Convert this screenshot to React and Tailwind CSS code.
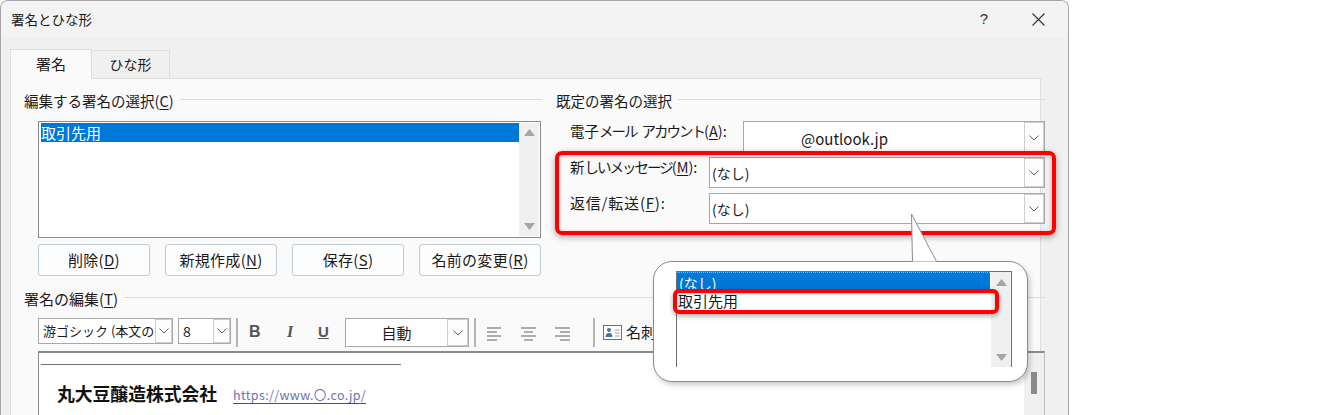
const jp = { fontFamily: '"Noto Sans CJK JP","Noto Sans",sans-serif' };

function Chevron() {
  return (
    <svg width="10" height="6" viewBox="0 0 10 6" fill="none" stroke="#606060" strokeWidth="1">
      <path d="M0.5 0.5 L5 5 L9.5 0.5" />
    </svg>
  );
}

function ArrowBtn({ className }) {
  return (
    <div className={"flex items-center justify-center border border-[#cfcfcf] bg-[#fdfdfd] shrink-0 " + className}>
      <Chevron />
    </div>
  );
}

function U({ children }) {
  return <span className="underline underline-offset-2">{children}</span>;
}

function K({ children }) {
  return <span className="tracking-[-2px]">{children}</span>;
}

function GroupTitle({ children, className }) {
  return (
    <div className={"flex items-center gap-[6px] h-[20px] text-[14.5px] leading-[20px] text-[#1a1a1a] " + className}>
      <span className="whitespace-nowrap">{children}</span>
      <div className="flex-1 h-px bg-[#dcdcdc] -mt-[3px]" />
    </div>
  );
}

function Btn({ children, className }) {
  return (
    <div className={"h-[32px] border border-[#bccad6] rounded-[3px] bg-[#fdfdfd] flex items-center justify-center text-[15px] tracking-[0.3px] text-[#1a1a1a] whitespace-nowrap " + className}>
      <span>{children}</span>
    </div>
  );
}

function FieldRow({ label, value, mt, h, selectW, valueClass }) {
  return (
    <div className={"flex justify-between items-start pl-[14px] " + mt}>
      <span className="text-[14.5px] leading-[20px] text-[#1a1a1a] whitespace-nowrap">{label}</span>
      <div className={"bg-white border border-[#a8a8a8] flex items-stretch " + selectW + " " + h}>
        <div className={"flex-1 text-[14px] text-[#1a1a1a] flex items-center " + valueClass}>{value}</div>
        <ArrowBtn className="w-[20px]" />
      </div>
    </div>
  );
}

function Align({ kind }) {
  const rows = kind === "l"
    ? ["M0 1H14", "M0 5H10", "M0 9H14", "M0 13H10"]
    : kind === "c"
    ? ["M0 1H15", "M3 5H12", "M0 9H15", "M3 13H12"]
    : ["M0 1H15", "M5 5H15", "M0 9H15", "M5 13H15"];
  return (
    <svg width="15" height="14" viewBox="0 0 15 14" fill="none" stroke="#606060" strokeWidth="1">
      {rows.map((d) => <path key={d} d={d} />)}
    </svg>
  );
}

function Sep({ className }) {
  return <div className={"w-[2px] h-[29px] bg-[#b4b4b4] shrink-0 " + className} />;
}

export default function App() {
  return (
    <div className="relative w-[1344px] h-[415px] bg-white overflow-hidden" style={jp}>
      {/* dialog */}
      <div className="w-[1069px] h-[415px] bg-[#f0f0f0] border border-b-0 border-[#a6a6a6] rounded-t-[8px] flex flex-col overflow-hidden">
        {/* title bar */}
        <div className="h-[37px] bg-[#f3f3f3] flex items-center justify-between pl-[10px] shrink-0">
          <span className="text-[13.5px] text-[#1a1a1a]">署名とひな形</span>
          <div className="flex items-center">
            <span className="text-[15px] text-[#333] mr-[44px]" style={{ fontFamily: '"Liberation Sans",sans-serif' }}>?</span>
            <svg className="mr-[23px]" width="13" height="13" viewBox="0 0 13 13" stroke="#333" strokeWidth="1.1" fill="none">
              <path d="M0.5 0.5 L12.5 12.5 M12.5 0.5 L0.5 12.5" />
            </svg>
          </div>
        </div>
        {/* tabs */}
        <div className="h-[40px] flex items-end pl-[9px] shrink-0">
          <div className="w-[82px] h-[30px] bg-[#fafafa] border border-b-0 border-[#dedede] flex items-center justify-center text-[15px] text-[#1a1a1a] -mb-px z-10">署名</div>
          <div className="w-[78px] h-[28px] bg-[#f0f0f0] border border-b-0 border-l-0 border-[#dedede] flex items-center justify-center text-[14px] text-[#1a1a1a]">ひな形</div>
        </div>
        {/* panel */}
        <div className="ml-[9px] w-[1031px] flex-1 bg-[#fafafa] border border-b-0 border-[#dedede] pl-[13px] pt-[12px]">
          <div className="flex">
            {/* left column */}
            <div className="w-[532px] shrink-0 pr-[2px]">
              <GroupTitle className="w-[518px]">編集する署名の選択(<U>C</U>)</GroupTitle>
              <div className="ml-[14px] mt-[10px] w-[503px] h-[117px] border border-[#8a8a8a] bg-white flex p-px">
                <div className="flex-1">
                  <div className="h-[19px] ml-px bg-[#0078d7] text-white text-[15px] leading-[19px]">取引先用</div>
                </div>
                <div className="w-[20px] bg-[#f0f0f0] flex flex-col items-center justify-between py-[6px]">
                  <svg width="11" height="7" viewBox="0 0 11 7" fill="#a6a6a6"><path d="M5.5 0L11 7H0z" /></svg>
                  <svg width="11" height="7" viewBox="0 0 11 7" fill="#a6a6a6"><path d="M5.5 7L0 0H11z" /></svg>
                </div>
              </div>
              <div className="ml-[14px] mt-[6px] flex gap-[15px]">
                <Btn className="w-[112px]">削除(<U>D</U>)</Btn>
                <Btn className="w-[112px]">新規作成(<U>N</U>)</Btn>
                <Btn className="w-[112px]">保存(<U>S</U>)</Btn>
                <Btn className="w-[122px]">名前の変更(<U>R</U>)</Btn>
              </div>
            </div>
            {/* right column */}
            <div className="w-[489px] shrink-0">
              <GroupTitle>既定の署名の選択</GroupTitle>
              <FieldRow mt="mt-[10px]" h="h-[34px]" selectW="w-[302px]" valueClass="pl-[57px] pt-[2px] text-[15px]"
                label={<>電子<K>メール</K><span className="ml-[5px]" /><K>アカウント</K>(<U>A</U>):</>} value="@outlook.jp" />
              <FieldRow mt="mt-[2px]" h="h-[31px]" selectW="w-[336px]" valueClass="pl-[2px] pt-px"
                label={<>新<K>しいメッセージ</K>(<U>M</U>):</>} value="(なし)" />
              <FieldRow mt="mt-[5px]" h="h-[31px]" selectW="w-[336px]" valueClass="pl-[2px] pt-px"
                label={<span className="text-[15px] tracking-[0.8px]">返信/転送(<U>F</U>):</span>} value="(なし)" />
            </div>
          </div>
          {/* signature edit */}
          <GroupTitle className="mt-[13px] w-[1021px]"><span className="text-[15px]">署名の編集(<U>T</U>)</span></GroupTitle>
          <div className="ml-[14px] mt-[9px] h-[30px] flex items-start w-[1007px]">
            <div className="w-[135px] h-[26px] border border-[#a8a8a8] bg-white flex items-stretch">
              <div className="flex-1 overflow-hidden whitespace-nowrap text-[13px] leading-[24px] pl-[4px] text-[#1a1a1a]">游ゴシック (本文のフォント)</div>
              <ArrowBtn className="w-[17px]" />
            </div>
            <div className="ml-[5px] w-[53px] h-[26px] border border-[#a8a8a8] bg-white flex items-stretch">
              <div className="flex-1 text-[14px] leading-[24px] pl-[4px] text-[#1a1a1a]">8</div>
              <ArrowBtn className="w-[17px]" />
            </div>
            <Sep className="ml-[5px]" />
            <span className="ml-[11px] w-[12px] text-[16px] leading-[28px] font-bold text-[#555]" style={{ fontFamily: '"Liberation Sans",sans-serif' }}>B</span>
            <span className="ml-[26px] w-[10px] text-[16px] leading-[28px] font-bold italic text-[#555]" style={{ fontFamily: '"Liberation Serif",serif' }}>I</span>
            <span className="ml-[21px] w-[13px] text-[15px] leading-[28px] font-bold underline text-[#555]" style={{ fontFamily: '"Liberation Sans",sans-serif' }}>U</span>
            <div className="ml-[14px] w-[124px] h-[29px] border border-[#a8a8a8] bg-white flex items-stretch">
              <div className="flex-1 text-[15px] leading-[27px] text-center text-[#1a1a1a]">自動</div>
              <ArrowBtn className="w-[21px]" />
            </div>
            <Sep className="ml-[5px]" />
            <div className="ml-[11px] mt-[9px] flex gap-[19px]">
              <Align kind="l" />
              <Align kind="c" />
              <Align kind="r" />
            </div>
            <Sep className="ml-[23px]" />
            <svg className="ml-[8px] mt-[7px]" width="19" height="15" viewBox="0 0 19 15">
              <rect x="0.5" y="0.5" width="18" height="14" fill="#fff" stroke="#707070" />
              <circle cx="6" cy="5" r="2" fill="#3f77b5" />
              <path d="M2.5 12 Q2.5 8 6 8 Q9.5 8 9.5 12z" fill="#3f77b5" />
              <path d="M12 5H16.5M12 8H16.5M12 11H16.5" stroke="#a0a0a0" />
            </svg>
            <span className="ml-[4px] text-[15px] leading-[28px] whitespace-nowrap text-[#1a1a1a]">名刺</span>
          </div>
          {/* editor */}
          <div className="ml-[14px] mt-[3px] w-[1007px] h-[70px] bg-white border-t-2 border-l border-r border-t-[#8a8a8a] border-l-[#8a8a8a] border-r-[#c0c0c0] flex">
            <div className="flex-1 pl-[2px] pt-[11px]">
              <div className="w-[360px] h-px bg-[#707070]" />
              <div className="flex items-center mt-[15px] pl-[16px]">
                <span className="text-[17.8px] leading-[26px] font-bold text-[#111]">丸大豆醸造株式会社</span>
                <span className="ml-[16px] mt-[3px] text-[12.5px] leading-[17px] tracking-[0.35px] text-[#6f6fb4] border-b border-[#0563c1]">https://www.〇.co.jp/</span>
              </div>
            </div>
            <div className="w-[20px] bg-[#f0f0f0] flex justify-center pt-[19px]">
              <div className="w-[6px] h-[22px] bg-[#8a8a8a]" />
            </div>
          </div>
        </div>
      </div>

      {/* annotation: red box around defaults */}
      <div className="absolute left-[555px] top-[151px] w-[501px] h-[84px] border-[4px] border-[#ff0000] rounded-[7px] shadow-[0_2px_6px_rgba(0,0,0,0.35),inset_0_1px_4px_rgba(0,0,0,0.25)]" />

      {/* callout */}
      <div className="absolute left-[653px] top-[261px] w-[375px] h-[121px] bg-white border border-[#8c8c8c] rounded-[19px] shadow-[2px_3px_5px_rgba(0,0,0,0.2)] pl-[22px] pt-[9px]">
        <div className="w-[336px] h-[96px] border-t border-l border-r border-[#707070] flex">
          <div className="flex-1">
            <div className="h-[19px] bg-[#0078d7] text-white text-[14px] leading-[20px] pl-[2px] mr-[1px] border-t border-dotted border-[#e0a050]">(なし)</div>
            <div className="text-[15px] leading-[20px] pl-[1px] text-[#1a1a1a]">取引先用</div>
          </div>
          <div className="w-[20px] bg-[#f0f0f0] flex flex-col items-center justify-between pt-[7px] pb-[6px]">
            <svg width="11" height="7" viewBox="0 0 11 7" fill="#a6a6a6"><path d="M5.5 0L11 7H0z" /></svg>
            <svg width="11" height="7" viewBox="0 0 11 7" fill="#a6a6a6"><path d="M5.5 7L0 0H11z" /></svg>
          </div>
        </div>
      </div>
      {/* callout tail */}
      <svg className="absolute left-[908px] top-[212px]" width="34" height="51" viewBox="0 0 34 51">
        <path d="M3.5 2 L4.5 49.5 L28.5 49.5 Z" fill="#fff" />
        <path d="M4.5 49.5 L3.5 2 L28.5 49.5" fill="none" stroke="#8c8c8c" />
      </svg>
      {/* annotation: red box around list row */}
      <div className="absolute left-[673px] top-[289px] w-[326px] h-[25px] border-[4px] border-[#ff0000] rounded-[6px] shadow-[0_2px_5px_rgba(0,0,0,0.35),inset_0_1px_3px_rgba(0,0,0,0.25)]" />
    </div>
  );
}
